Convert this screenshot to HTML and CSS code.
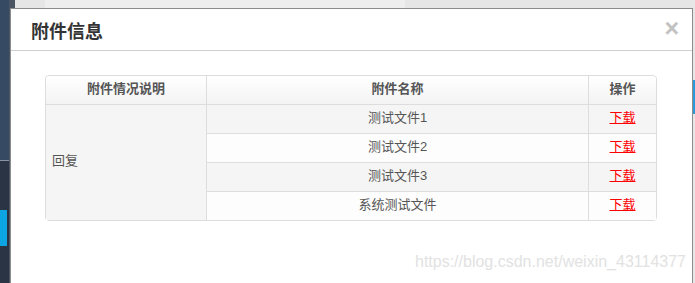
FILE: index.html
```html
<!DOCTYPE html>
<html lang="zh">
<head>
<meta charset="utf-8">
<link rel="stylesheet" href="styles.css">
</head>
<body>
<div class="page">
  <aside class="sidebar">
    <div class="side-top"></div>
    <div class="side-bottom"><div class="side-active"></div></div>
  </aside>
  <div class="edge"></div>
  <main class="main">
    <div class="topbar"><span class="topbar-tab"></span></div>
  </main>
</div>
<div class="right-peek"><div class="peek-blue"></div></div>

<div class="modal">
  <div class="modal-header">
    <h4 class="modal-title">附件信息</h4>
    <span class="close">&times;</span>
  </div>
  <div class="modal-body">
    <table class="att-table">
      <thead>
        <tr>
          <th class="c1">附件情况说明</th>
          <th class="c2">附件名称</th>
          <th class="c3">操作</th>
        </tr>
      </thead>
      <tbody>
        <tr class="odd">
          <td class="desc" rowspan="4">回复</td>
          <td>测试文件1</td>
          <td><a class="dl" href="#">下载</a></td>
        </tr>
        <tr class="even">
          <td>测试文件2</td>
          <td><a class="dl" href="#">下载</a></td>
        </tr>
        <tr class="odd">
          <td>测试文件3</td>
          <td><a class="dl" href="#">下载</a></td>
        </tr>
        <tr class="even">
          <td>系统测试文件</td>
          <td><a class="dl" href="#">下载</a></td>
        </tr>
      </tbody>
    </table>
  </div>
  <div class="watermark">https://blog.csdn.net/weixin_43114377</div>
</div>
</body>
</html>
```

FILE: styles.css
```css
html, body {
  margin: 0;
  padding: 0;
}
body {
  width: 695px;
  height: 283px;
  overflow: hidden;
  position: relative;
  font-family: "Liberation Sans", "Noto Sans CJK SC", sans-serif;
  background: #e9e9e9;
}
.page {
  display: flex;
  height: 283px;
}
.sidebar {
  width: 9px;
  display: flex;
  flex-direction: column;
}
.side-top {
  height: 160px;
  background: #364a64;
  border-bottom: 1px solid #8895a6;
}
.side-bottom {
  flex: 1;
  background: #2b3445;
  padding-top: 49px;
}
.side-active {
  width: 7px;
  height: 36px;
  background: #0aa5e2;
}
.edge {
  width: 6px;
  background: #4b5564;
}
.main {
  flex: 1;
  background: #f2f2f2;
}
.topbar {
  height: 8px;
  background: #e6e6e6;
  padding-left: 30px;
}
.topbar-tab {
  display: block;
  width: 360px;
  height: 8px;
  background: #eeeeee;
}
.right-peek {
  position: absolute;
  right: 0;
  top: 0;
  width: 3px;
  height: 283px;
  background: #e7e7e7;
}
.peek-blue {
  margin-top: 80px;
  height: 34px;
  background: #2b9ad6;
}
.modal {
  position: absolute;
  left: 10px;
  top: 8px;
  width: 681px;
  height: 274px;
  background: #ffffff;
  border: 1px solid #8c8c8c;
  border-bottom: 0;
}
.modal-header {
  height: 41px;
  border-bottom: 1px solid #cfcfcf;
  display: flex;
  align-items: center;
  justify-content: space-between;
  padding: 0 13px 0 20px;
}
.modal-title {
  margin: 0;
  font-size: 18px;
  font-weight: bold;
  color: #333333;
}
.close {
  font-size: 25px;
  font-weight: bold;
  color: #c2c2c2;
  line-height: 1;
  margin-top: -2px;
}
.modal-body {
  padding: 24px 34px 0 34px;
}
.att-table {
  width: 612px;
  border-collapse: separate;
  border-spacing: 0;
  border: 1px solid #dddddd;
  border-radius: 4px;
  font-size: 13px;
  color: #555555;
}
.att-table th,
.att-table td {
  padding: 0 6px;
  text-align: center;
  border-left: 1px solid #dddddd;
  border-top: 1px solid #dddddd;
  box-sizing: border-box;
  line-height: 16px;
}
.att-table th {
  border-top: 0;
  height: 28px;
  padding-bottom: 2px;
  font-weight: bold;
  color: #555555;
  background: linear-gradient(#ffffff, #f3f3f3);
}
.att-table th.c1 {
  border-left: 0;
  width: 160px;
  border-top-left-radius: 4px;
}
.att-table th.c2 {
  width: 382px;
}
.att-table th.c3 {
  border-top-right-radius: 4px;
}
.att-table td {
  height: 29px;
  padding-bottom: 3px;
}
.att-table td.desc {
  border-left: 0;
  text-align: left;
  background: #f5f5f5;
}
.odd td {
  background: #f5f5f5;
}
.even td {
  background: #fdfdfd;
}
.dl {
  color: #ff0000;
  text-decoration: underline;
}
.watermark {
  position: absolute;
  right: 6px;
  top: 244px;
  font-size: 16px;
  color: #e2e2e2;
  font-family: "Liberation Sans", Arial, sans-serif;
}
```
